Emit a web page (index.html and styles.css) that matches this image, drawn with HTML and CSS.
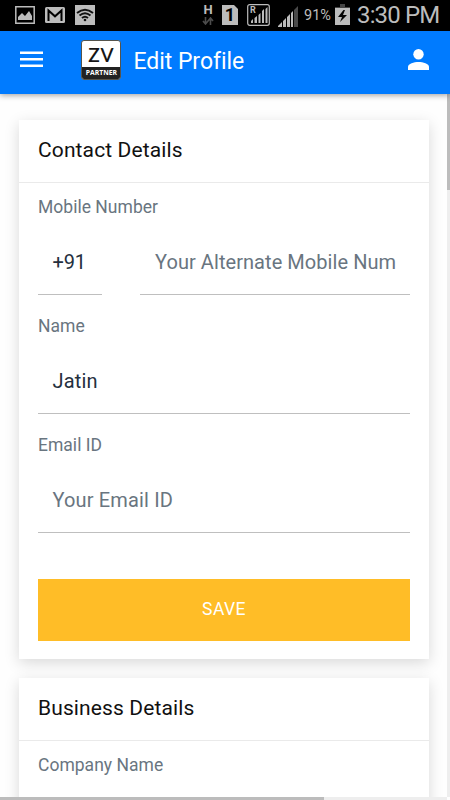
FILE: index.html
```html
<!DOCTYPE html>
<html lang="en">
<head>
<meta charset="utf-8">
<title>Edit Profile</title>
<link rel="stylesheet" href="styles.css">
</head>
<body>
<div class="screen">
  <div class="status">
    <svg class="status-left" width="82" height="20" viewBox="0 0 82 20">
      <path fill="none" stroke="#bcbcbc" stroke-width="1.5" d="M.8 1.8h18.4v16.4H.8z"/>
      <path fill="#bcbcbc" d="M3 15v-3l4-4 3 3 4-5 3 5v4z"/>
      <rect x="30" y="2" width="20" height="16" rx="1.5" fill="#bcbcbc"/>
      <path fill="none" stroke="#000" stroke-width="2" d="M33.500 16V5.500l6.500 5.800 6.500-5.800V16"/>
      <path fill="#bcbcbc" d="M60 0h20v20H60z"/>
      <path fill="none" stroke="#111" stroke-width="2" d="M62 8q8-6.500 16 0M64.500 10.500q5.500-4.500 11 0M67 13q3-2.500 6 0"/>
      <circle cx="70" cy="15" r="1.300" fill="#111"/>
    </svg>
    <div class="status-right">
      <div class="network"><span>H</span>
        <svg width="12" height="8" viewBox="0 0 12 8"><path fill="none" stroke="#4c4c4c" stroke-width="1.600" d="M3.500 0v6M1 4l2.500 3L6 4M8.500 8V2M6 4l2.500-3L11 4"/></svg>
      </div>
      <div class="sim">1</div>
      <div class="roaming">
        <svg width="23" height="22" viewBox="0 0 23 22"><rect x=".7" y=".7" width="21.600" height="20.600" rx="2" fill="none" stroke="#bcbcbc" stroke-width="1.200"/><path fill="#bcbcbc" d="M4 19v-2l2-2v4zM7.500 19v-5l2.500-2v7zM11.500 19v-8l2-2v10zM15 19V7l2-2v14zM18.500 19V5l2-2v16z"/></svg>
        <span>R</span>
      </div>
      <svg class="signal" width="21" height="21" viewBox="0 0 21 21"><path fill="#bcbcbc" d="M0 21v-1l4-4v5zM5 21v-6l3-3v9zM9 21V11l3-3v13zM13 21V7l2-2v16z"/><path fill="#4a4a4a" d="M16 21V4l4-4v21z"/></svg>
      <span class="percent">91%</span>
      <svg class="battery" width="15" height="21" viewBox="0 0 15 21"><path fill="#444" d="M5 0h5v3h5v4H0V3h5z"/><path fill="#bcbcbc" d="M0 4h15v17H0z"/><path fill="#050505" d="M8.500 6 3 13h4l-2 5 7-7H8l2-5z"/></svg>
      <span class="clock">3:30 PM</span>
    </div>
  </div>
  <header class="topbar">
    <svg class="menu" width="23" height="17" viewBox="0 0 23 17"><path fill="#fff" d="M0 .5h23v2.600H0zM0 7h23v2.600H0zM0 13.500h23v2.600H0z"/></svg>
    <div class="logo"><div class="logo-mark">ZV</div><div class="logo-sub">PARTNER</div></div>
    <h1>Edit Profile</h1>
    <svg class="person" width="21" height="21" viewBox="0 0 21 21"><circle cx="10.500" cy="5.300" r="5.200" fill="#fff"/><path fill="#fff" d="M0 21v-3c0-3.300 6-5 10.500-5S21 14.700 21 18v3z"/></svg>
  </header>
  <main>
    <section class="card contact">
      <h2>Contact Details</h2>
      <div class="fields">
        <div class="label">Mobile Number</div>
        <div class="phone"><div class="input code">+91</div><div class="input hint">Your Alternate Mobile Num</div></div>
        <div class="label">Name</div>
        <div class="input">Jatin</div>
        <div class="label">Email ID</div>
        <div class="input hint">Your Email ID</div>
        <button>SAVE</button>
      </div>
    </section>
    <section class="card business">
      <h2>Business Details</h2>
      <div class="fields"><div class="label">Company Name</div></div>
    </section>
    <div class="scroll-y"><div></div></div>
    <div class="scroll-x"><div></div></div>
  </main>
</div>
</body>
</html>
```
FILE: styles.css
```css
* { box-sizing: border-box; }
body { margin: 0; font-family: Roboto, sans-serif; background: #fefefe; }
.screen { width: 450px; height: 800px; overflow: hidden; display: flex; flex-direction: column; }
.status { height: 31px; flex: none; background: #000; color: #bcbcbc; display: flex; justify-content: space-between; padding: 0 11px 0 15px; }
.status-left { margin-top: 5px; }
.status-right { display: flex; align-items: flex-start; }
.network { width: 12px; margin: 4px 8px 0 0; display: flex; flex-direction: column; align-items: center; font-size: 13px; font-weight: 700; line-height: 12px; }
.network svg { margin-top: 1px; }
.sim { width: 16px; height: 20px; margin: 5px 9px 0 0; background: #bcbcbc; color: #000; clip-path: polygon(0 0, 75% 0, 100% 20%, 100% 100%, 0 100%); font-size: 18px; line-height: 20px; font-weight: 700; text-align: center; }
.roaming { position: relative; width: 23px; height: 22px; margin: 4px 8px 0 0; }
.roaming span { position: absolute; left: 3px; top: 2px; font-size: 9px; line-height: 9px; font-weight: 700; }
.signal { margin: 6px 5px 0 0; }
.percent { width: 27px; margin: 7px 4px 0 0; font-size: 14.5px; line-height: 17px; white-space: nowrap; }
.battery { margin: 4px 7px 0 0; }
.clock { width: 82px; font-size: 24px; line-height: 31px; letter-spacing: -.85px; white-space: nowrap; }
.topbar { position: relative; z-index: 2; height: 63px; flex: none; background: #007bff; color: #fff; display: flex; align-items: center; padding: 0 21px 0 20px; box-shadow: 0 1px 6px rgba(0,0,0,.4); }
.menu { margin-top: -7px; }
.logo { width: 40px; height: 40px; margin: -5px 12px 0 38.4px; border: 1px solid #55544c; border-radius: 3px; overflow: hidden; background: #fff; color: #151515; text-align: center; }
.logo-mark { height: 26px; font: 600 19px/28px Lato, sans-serif; letter-spacing: .8px; }
.logo-sub { height: 13px; background: #222; color: #fff; font: 700 6.8px/12px "Open Sans", sans-serif; }
h1 { margin: -2px 0 0; font-size: 23px; line-height: 31px; font-weight: 400; letter-spacing: -.03px; flex: 1; }
.person { margin-top: -7px; }
main { position: relative; flex: 1; padding: 26px 21px 0 19px; overflow: hidden; background: #fefefe; }
.card { background: #fff; box-shadow: 0 4px 14px rgba(0,0,0,.15); margin-bottom: 19px; }
.contact { height: 539px; }
.business { height: 180px; }
h2 { height: 63px; margin: 0; padding: 0 19px; border-bottom: 1px solid #eaeaea; color: #111; font-size: 21px; line-height: 61px; font-weight: 400; letter-spacing: .12px; }
.fields { padding: 13px 19px 0; }
.label { height: 22px; color: #697580; font-size: 17.5px; line-height: 22px; letter-spacing: .02px; }
.input { height: 77px; margin-bottom: 20px; padding: 23px 14px 0 14.5px; border-bottom: 1px solid #bfbfbf; color: #25303e; font-size: 20px; line-height: 42px; white-space: nowrap; letter-spacing: .15px; }
.hint { color: #697580; }
.phone { display: flex; gap: 38px; }
.code { flex: none; width: 64px; letter-spacing: -.2px; }
.phone .hint { flex: 1; min-width: 0; padding-left: 15px; letter-spacing: .06px; }
button { display: block; width: 100%; height: 62px; margin-top: 46px; padding: 0 0 2px; border: 0; background: #ffbd27; color: #fff; font: 400 17.5px Roboto, sans-serif; letter-spacing: .4px; }
.scroll-y { position: absolute; z-index: 1; right: 0; top: 0; bottom: 3px; width: 3px; background: #eee; }
.scroll-y div { height: 96px; background: #bcbcbc; }
.scroll-x { position: absolute; left: 0; right: 3px; bottom: 0; height: 3px; background: #eee; }
.scroll-x div { width: 324px; height: 3px; background: #bcbcbc; }
```
